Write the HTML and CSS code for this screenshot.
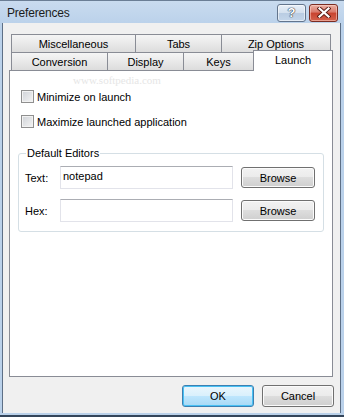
FILE: index.html
```html
<!DOCTYPE html>
<html lang="en">
<head>
  <meta charset="UTF-8" />
  <title>Preferences</title>
  <link rel="stylesheet" href="styles.css">
</head>
<body>
  <div class="window">
    <div class="titlebar">
      <span class="title">Preferences</span>
      <div class="caption">
        <button class="cap help"><span>?</span></button>
        <button class="cap close">
          <svg width="14" height="11" viewBox="0 0 14 11">
            <path d="M2.5 1.5 L11.5 9.5 M11.5 1.5 L2.5 9.5" stroke="#5a1c14" stroke-width="4" stroke-linecap="square" />
            <path d="M2.5 1.5 L11.5 9.5 M11.5 1.5 L2.5 9.5" stroke="#fff" stroke-width="2.2" stroke-linecap="square" />
          </svg>
        </button>
      </div>
    </div>

    <div class="client">
      <div class="tabctl">
        <div class="tabrow">
          <div class="tab w-misc">Miscellaneous</div>
          <div class="tab w-tabs">Tabs</div>
          <div class="tab w-zip">Zip Options</div>
        </div>
        <div class="tabrow row2">
          <div class="tab w-conv">Conversion</div>
          <div class="tab w-disp">Display</div>
          <div class="tab w-keys">Keys</div>
          <div class="tab active">Launch</div>
        </div>

        <div class="panel">
          <label class="opt"><span class="check"></span>Minimize on launch</label>
          <label class="opt opt2"><span class="check"></span>Maximize launched application</label>

          <div class="group">
            <span class="legend">Default Editors</span>
            <div class="field">
              <span class="lbl">Text:</span>
              <div class="input">notepad</div>
              <button class="btn browse">Browse</button>
            </div>
            <div class="field field2">
              <span class="lbl">Hex:</span>
              <div class="input"></div>
              <button class="btn browse">Browse</button>
            </div>
          </div>

          <span class="wm-url">www.softpedia.com</span>
        </div>
      </div>

      <div class="footer">
        <button class="btn default">OK</button>
        <button class="btn">Cancel</button>
      </div>
    </div>
  </div>
</body>
</html>
```

FILE: styles.css
```css
/* Reset */
* {
  box-sizing: border-box;
}
body {
  margin: 0;
  font-family: "Liberation Sans", Arial, sans-serif;
  font-size: 11px;
  color: #000;
  background: #b9d1ea;
}
button {
  font: inherit;
  color: inherit;
  padding: 0;
  margin: 0;
}

/* window frame */
.window {
  width: 344px;
  height: 417px;
  display: flex;
  flex-direction: column;
  padding: 0 3px 2px 2px;
  border-top: 1px solid #6b7e95;
  border-bottom: 2px solid #34455a;
  background: linear-gradient(#c9dbef, #bad1ea 24px);
}
.titlebar {
  height: 22px;
  flex-shrink: 0;
  display: flex;
  align-items: center;
  padding-left: 5px;
}
.title {
  flex: 1;
  font-size: 12px;
  color: #1b1b1b;
  padding-top: 2px;
  letter-spacing: -0.2px;
}
.caption {
  display: flex;
  gap: 3px;
  margin-right: 3px;
  margin-top: 1px;
}
.cap {
  height: 18px;
  border-radius: 3px;
  display: flex;
  align-items: center;
  justify-content: center;
}
.help {
  width: 29px;
  border: 1px solid #63758d;
  background: linear-gradient(#e8eff8, #d3e0ee 50%, #b9cce2 50%, #c4d6ea);
  box-shadow: inset 0 0 0 1px rgba(255,255,255,0.55);
}
.help span {
  font-weight: bold;
  font-size: 13px;
  color: #fff;
  text-shadow: 0 0 1px #2c3846, 0 0 1px #2c3846, 0 0 1px #2c3846;
}
.close {
  width: 29px;
  border: 1px solid #7a2c22;
  background: linear-gradient(#eab0a4, #d9786a 45%, #c8432f 50%, #d4624d);
  box-shadow: inset 0 0 0 1px rgba(255,220,210,0.5);
}

/* client area */
.client {
  flex: 1;
  display: flex;
  flex-direction: column;
  background: #f0f0f0;
  border-left: 1px solid #5d6f86;
  border-right: 1px solid #5d6f86;
  padding: 11px 0 0 6px;
}
.tabctl {
  position: relative;
  width: 324px;
}
.tabrow {
  display: flex;
  height: 18px;
  padding-left: 2px;
}
.row2 {
  align-items: flex-end;
}
.tab {
  height: 18px;
  margin-left: -1px;
  border: 1px solid #898c95;
  border-bottom: none;
  background: linear-gradient(#f5f5f5, #e9e9e9 50%, #dcdcdc);
  display: flex;
  align-items: center;
  justify-content: center;
  padding-top: 1px;
}
.tab:first-child {
  margin-left: 0;
}
.w-misc { width: 125px; }
.w-tabs { width: 87px; }
.w-zip  { width: 110px; }
.w-conv { width: 97px; }
.w-disp { width: 77px; }
.w-keys { width: 71px; }
.tab.active {
  width: 80px;
  height: 21px;
  margin-bottom: -1px;
  background: #fff;
  position: relative;
  z-index: 1;
  padding-top: 0;
  padding-bottom: 2px;
}

.panel {
  position: relative;
  height: 307px;
  border: 1px solid #898c95;
  background: #fff;
  padding: 19px 8px 0 11px;
}
.opt {
  display: flex;
  align-items: center;
  gap: 3px;
  height: 13px;
}
.opt2 {
  margin-top: 12px;
}
.check {
  width: 13px;
  height: 13px;
  border: 1px solid #8f8f8f;
  background: linear-gradient(135deg, #cfd2d7, #f4f4f4);
  box-shadow: inset 0 0 0 1px #f2f2f2;
}

.group {
  position: relative;
  margin: 25px 0 0 -3px;
  height: 79px;
  border: 1px solid #d5dfe5;
  border-radius: 3px;
  padding: 12px 8px 0 6px;
}
.legend {
  position: absolute;
  top: -7px;
  left: 7px;
  padding: 0 1px;
  background: #fff;
  line-height: 13px;
}
.field {
  display: flex;
  align-items: center;
  height: 23px;
}
.field2 {
  margin-top: 10px;
}
.lbl {
  width: 35px;
}
.input {
  width: 173px;
  height: 23px;
  border: 1px solid #e2e3ea;
  border-top-color: #abadb3;
  padding: 3px 2px;
}
.btn {
  height: 21px;
  width: 73px;
  border: 1px solid #707070;
  border-radius: 3px;
  background: linear-gradient(#f2f2f2, #ebebeb 50%, #dddddd 50%, #cfcfcf);
  box-shadow: inset 0 0 0 1px #fbfbfb;
}
.browse {
  width: 74px;
  margin-left: 8px;
  padding-top: 1px;
}

.footer {
  display: flex;
  justify-content: flex-end;
  gap: 8px;
  margin-top: 8px;
  padding-right: 6px;
}
.footer .btn {
  width: 72px;
  height: 22px;
}
.btn.default {
  border-color: #3c7fb1;
  background: linear-gradient(#eaf6fd, #d9f0fc 50%, #bee6fd 50%, #a7d9f5);
  box-shadow: inset 0 0 0 1px #48c1f4;
}

/* watermark */
.wm-url {
  position: absolute;
  left: 63px;
  top: 3px;
  font-family: "Liberation Serif", serif;
  font-size: 11px;
  color: #e6e6e6;
}
```
